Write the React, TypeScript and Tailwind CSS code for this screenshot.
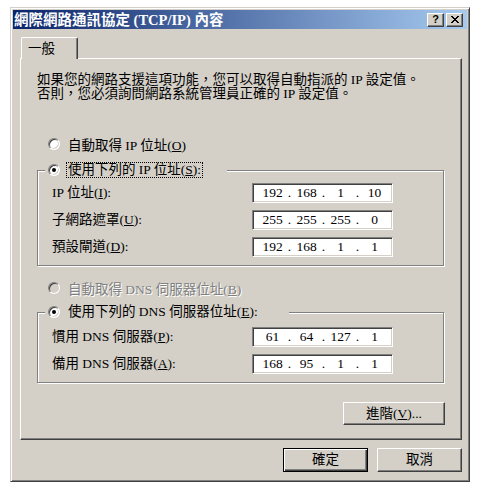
import React from "react";

function Radio({ checked = false, disabled = false }: { checked?: boolean; disabled?: boolean }) {
  return (
    <span
      className={
        disabled
          ? "inline-flex w-[12px] h-[12px] shrink-0 items-center justify-center rounded-full border border-t-[#808080] border-l-[#808080] border-r-white border-b-white bg-[#d4d0c8] shadow-[inset_1px_1px_0_#404040,inset_-1px_-1px_0_#d4d0c8]"
          : "inline-flex w-[12px] h-[12px] shrink-0 items-center justify-center rounded-full border border-t-[#808080] border-l-[#808080] border-r-white border-b-white bg-white shadow-[inset_1px_1px_0_#404040,inset_-1px_-1px_0_#d4d0c8]"
      }
    >
      {checked && <span className="w-[4px] h-[4px] rounded-full bg-black" />}
    </span>
  );
}

function IpField({ parts }: { parts: string[] }) {
  return (
    <div className="w-[141px] h-[20px] shrink-0 bg-white border border-t-[#808080] border-l-[#808080] border-r-white border-b-white shadow-[inset_1px_1px_0_#404040,inset_-1px_-1px_0_#d4d0c8] flex items-center pl-[6px] leading-[16px]">
      {parts.map((p, i) => (
        <React.Fragment key={i}>
          {i > 0 && <span className="w-[7px] text-center">.</span>}
          <span className="w-[27px] text-center">{p}</span>
        </React.Fragment>
      ))}
    </div>
  );
}

function Row({ label, parts }: { label: React.ReactNode; parts: string[] }) {
  return (
    <div className="flex items-center h-[20px]">
      <span className="w-[200px] whitespace-nowrap">{label}</span>
      <IpField parts={parts} />
    </div>
  );
}

function TitleBtn({ children }: { children: React.ReactNode }) {
  return (
    <div className="w-[17px] h-[14px] bg-[#d4d0c8] border border-t-white border-l-white border-r-[#404040] border-b-[#404040] shadow-[inset_-1px_-1px_0_#808080] flex items-center justify-center">
      {children}
    </div>
  );
}

export default function App() {
  return (
    <div className="min-h-screen bg-white pl-[10px] pt-[7px] font-['Liberation_Serif','Noto_Sans_CJK_TC',serif] text-[13.5px] leading-[16px] text-black">
      <div className="w-[460px] h-[475px] bg-[#d4d0c8] border border-t-[#d4d0c8] border-l-[#d4d0c8] border-r-[#404040] border-b-[#404040] shadow-[inset_1px_1px_0_#fff,inset_-1px_-1px_0_#808080] p-[2px] flex flex-col">
        {/* Title bar */}
        <div className="h-[19px] shrink-0 bg-[linear-gradient(to_right,#0a246a,#a6caf0)] flex items-center pl-[1px] pr-[4px]">
          <span className="text-white font-bold text-[14.5px] whitespace-nowrap">網際網路通訊協定 (TCP/IP) 內容</span>
          <div className="ml-auto flex gap-[2px]">
            <TitleBtn>
              <span className="font-['Liberation_Sans',sans-serif] font-bold text-[11px] leading-none">?</span>
            </TitleBtn>
            <TitleBtn>
              <svg width="8" height="7" viewBox="0 0 8 7" shapeRendering="crispEdges">
                <path
                  fill="#000"
                  d="M0 0h2v1H0z M6 0h2v1H6z M1 1h2v1H1z M5 1h2v1H5z M2 2h4v1H2z M3 3h2v1H3z M2 4h4v1H2z M1 5h2v1H1z M5 5h2v1H5z M0 6h2v1H0z M6 6h2v1H6z"
                />
              </svg>
            </TitleBtn>
          </div>
        </div>

        {/* Body */}
        <div className="flex-1 flex flex-col pl-[7px] pr-[5px] pt-[8px]">
          {/* Tab */}
          <div className="relative z-10 -mb-px ml-px w-[57px] h-[22px] bg-[#d4d0c8] border-t border-l border-r border-t-white border-l-white border-r-[#404040] rounded-tl-[2px] rounded-tr-[2px] shadow-[inset_-1px_0_0_#808080] flex items-center pl-[6px]">
            一般
          </div>
          {/* Tab panel */}
          <div className="h-[382px] shrink-0 border border-t-white border-l-white border-r-[#404040] border-b-[#404040] shadow-[inset_-1px_-1px_0_#808080] pl-[16px] pr-[17px] flex flex-col">
            <p className="mt-[14px] leading-[14px] whitespace-nowrap">
              如果您的網路支援這項功能，您可以取得自動指派的 IP 設定值。
              <br />
              否則，您必須詢問網路系統管理員正確的 IP 設定值。
            </p>

            <div className="mt-[37px] h-[16px] flex items-center">
              <span className="ml-[11px]">
                <Radio />
              </span>
              <span className="ml-[8px] whitespace-nowrap">
                自動取得 IP 位址(<u>O</u>)
              </span>
            </div>

            <fieldset className="mt-[8px] p-0 m-0 border border-[#808080] shadow-[inset_1px_1px_0_#fff,1px_1px_0_#fff]">
              <legend className="ml-[7px] w-[182px] px-[3px] bg-[#d4d0c8]">
                <div className="h-[16px] flex items-center">
                  <Radio checked />
                  <span className="ml-[6px] px-[1px] border border-dotted border-black whitespace-nowrap leading-[14px]">
                    使用下列的 IP 位址(<u>S</u>):
                  </span>
                </div>
              </legend>
              <div className="pl-[14px] pt-[5px] pb-[8px] flex flex-col gap-[7px]">
                <Row label={<>IP 位址(<u>I</u>):</>} parts={["192", "168", "1", "10"]} />
                <Row label={<>子網路遮罩(<u>U</u>):</>} parts={["255", "255", "255", "0"]} />
                <Row label={<>預設閘道(<u>D</u>):</>} parts={["192", "168", "1", "1"]} />
              </div>
            </fieldset>

            <div className="mt-[16px] h-[16px] flex items-center">
              <span className="ml-[11px]">
                <Radio disabled />
              </span>
              <span className="ml-[8px] whitespace-nowrap text-[#808080] [text-shadow:1px_1px_0_#fff]">
                自動取得 DNS 伺服器位址(<u>B</u>)
              </span>
            </div>

            <fieldset className="mt-[6px] p-0 m-0 border border-[#808080] shadow-[inset_1px_1px_0_#fff,1px_1px_0_#fff]">
              <legend className="ml-[7px] w-[244px] px-[3px] bg-[#d4d0c8]">
                <div className="h-[16px] flex items-center">
                  <Radio checked />
                  <span className="ml-[8px] whitespace-nowrap">
                    使用下列的 DNS 伺服器位址(<u>E</u>):
                  </span>
                </div>
              </legend>
              <div className="pl-[14px] pt-[7px] pb-[8px] flex flex-col gap-[7px]">
                <Row label={<>慣用 DNS 伺服器(<u>P</u>):</>} parts={["61", "64", "127", "1"]} />
                <Row label={<>備用 DNS 伺服器(<u>A</u>):</>} parts={["168", "95", "1", "1"]} />
              </div>
            </fieldset>

            <div className="mt-[19px] flex justify-end -mr-px">
              <div className="w-[102px] h-[23px] border border-t-white border-l-white border-r-[#404040] border-b-[#404040] shadow-[inset_-1px_-1px_0_#808080] flex items-center justify-center whitespace-nowrap">
                進階(<u>V</u>)...
              </div>
            </div>
          </div>

          {/* Bottom buttons */}
          <div className="mt-[8px] flex justify-end gap-[9px]">
            <div className="w-[85px] h-[24px] border border-black shadow-[inset_1px_1px_0_#fff,inset_-1px_-1px_0_#404040,inset_-2px_-2px_0_#808080] flex items-center justify-center">
              確定
            </div>
            <div className="w-[85px] h-[24px] border border-t-white border-l-white border-r-[#404040] border-b-[#404040] shadow-[inset_-1px_-1px_0_#808080] flex items-center justify-center">
              取消
            </div>
          </div>
        </div>
      </div>
    </div>
  );
}
